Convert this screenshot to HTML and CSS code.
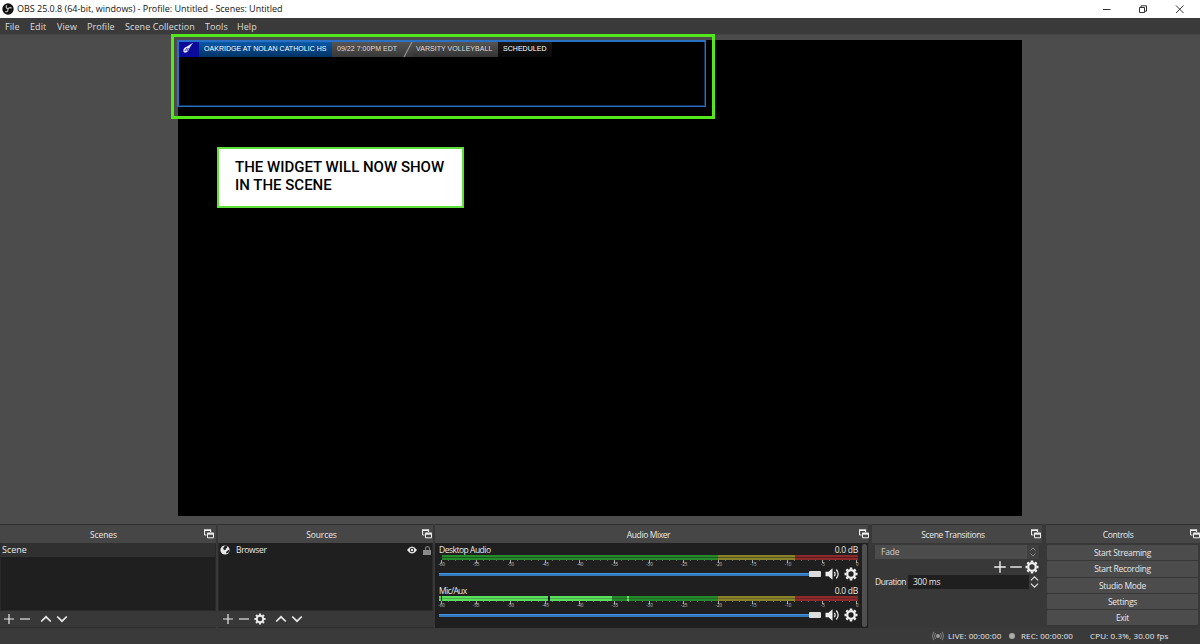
FILE: index.html
```html
<!DOCTYPE html>
<html lang="en">
<head>
<meta charset="utf-8">
<title>OBS 25.0.8</title>
<link rel="stylesheet" href="styles.css">
</head>
<body>
<svg class="defs" aria-hidden="true">
  <symbol id="popout" viewBox="0 0 10 10"><path d="M.5 6V.8h6V3M.5 1.3h6M.5 6h2" fill="none" stroke="currentColor" stroke-width="1.2"/><path d="M3.5 4.2h6v4.6h-6z" fill="none" stroke="currentColor"/><path d="M3.2 3.7h6.6v2H3.2z" fill="currentColor"/></symbol>
  <symbol id="plus" viewBox="0 0 12 12"><path d="M6 1v10M1 6h10" fill="none" stroke="currentColor" stroke-width="1.2"/></symbol>
  <symbol id="minus" viewBox="0 0 12 12"><path d="M1 6h10" fill="none" stroke="currentColor" stroke-width="1.2"/></symbol>
  <symbol id="up" viewBox="0 0 12 12"><path d="M1.2 8.5 6 3.8l4.8 4.7" fill="none" stroke="currentColor" stroke-width="1.7"/></symbol>
  <symbol id="down" viewBox="0 0 12 12"><path d="M1.2 3.5 6 8.2l4.8-4.7" fill="none" stroke="currentColor" stroke-width="1.7"/></symbol>
  <symbol id="gear" viewBox="-7 -7 14 14"><circle r="3.8" fill="none" stroke="currentColor" stroke-width="2.3"/><path d="M0-6.500v2M0 4.500v2M-6.500 0h2M4.500 0h2M-4.600-4.600l1.400 1.400M3.200 3.200l1.400 1.400M4.600-4.600 3.200-3.200M-3.200 3.200l-1.400 1.400" stroke="currentColor" stroke-width="2.500"/></symbol>
  <symbol id="speaker" viewBox="0 0 15 12"><path d="M.5 3.8h3L7.5.3v11.4l-4-3.5h-3z" fill="currentColor"/><path d="M9.3 3.8q1.6 2.2 0 4.4M11.3 1.5q3.7 4.5 0 9" fill="none" stroke="currentColor" stroke-width="1.2"/></symbol>
</svg>
<div class="window">
  <header class="titlebar">
    <svg class="logo" viewBox="0 0 12 12"><circle cx="6" cy="6" r="5.7" fill="#111"/><path d="M5 2.2C3.5 3.3 4 5.4 6 5.7M9.6 5.2C8 4 6.300 5 6.200 6.500M3.200 8.600C5 9.300 6.400 8 5.700 6.200" fill="none" stroke="#ccc" stroke-width="1.100"/></svg>
    <span class="title">OBS 25.0.8 (64-bit, windows) - Profile: Untitled - Scenes: Untitled</span>
    <svg class="winbtns" viewBox="0 0 82 10"><path d="M1 5.500h7.500" stroke="#333"/><path d="M37.500 3.500h5v5h-5zM39 3.300V1.800h5.500v5.400h-1.800" fill="none" stroke="#333"/><path d="m74 1.500 7.500 7.500M81.500 1.500 74 9" stroke="#333"/></svg>
  </header>
  <nav class="menu"><span class="m1">File</span><span class="m2">Edit</span><span class="m3">View</span><span class="m4">Profile</span><span class="m5">Scene Collection</span><span class="m6">Tools</span><span class="m7">Help</span></nav>

  <main class="preview">
    <div class="canvas">
      <div class="source">
        <div class="ticker">
          <div class="badge"><svg viewBox="0 0 12 12"><path d="M1.300 8.500Q1.500 5.500 5 4.500L11 .8 7.500 6Q6.500 10 3 10.700 1 10.600 1.300 8.500Z" fill="#e8e8ff"/><path d="m2.800 9 2.200-3M5 9l1.500-3" stroke="#1111a5" stroke-width=".8"/></svg></div>
          <div class="teams"><span>OAKRIDGE AT NOLAN CATHOLIC HS</span></div>
          <div class="when"><span>09/22 7:00PM EDT</span></div>
          <svg class="slash" viewBox="0 0 10 15"><path d="M1 15 9 0" stroke="#999" stroke-width="1.100"/></svg>
          <div class="sport"><span>VARSITY VOLLEYBALL</span></div>
          <div class="state"><span>SCHEDULED</span></div>
        </div>
      </div>
      <div class="highlight"></div>
      <div class="note"><span>THE WIDGET WILL NOW SHOW</span><br><span>IN THE SCENE</span></div>
    </div>
  </main>

  <section class="docks">
    <div class="dock scenes">
      <div class="head"><span>Scenes</span><svg><use href="#popout"/></svg></div>
      <div class="list"><div class="row selected"><span>Scene</span></div></div>
      <div class="tools"><svg><use href="#plus"/></svg><svg><use href="#minus"/></svg><svg class="gap"><use href="#up"/></svg><svg><use href="#down"/></svg></div>
    </div>
    <div class="dock sources">
      <div class="head"><span>Sources</span><svg><use href="#popout"/></svg></div>
      <div class="list"><div class="row">
        <svg class="globe" viewBox="0 0 10 10"><circle cx="5" cy="5" r="4.600" fill="#e8e8e8"/><path d="M5 .5 7.500 1.200l-.5 1.500L5.500 4l.5 1L4 5 3 3.500 3.800 2M8.500 5l1 .2L8.500 7.500 6.500 8.500 6 7z" fill="#222"/></svg>
        <span class="name">Browser</span>
        <svg class="eye" viewBox="0 0 10 8"><path d="M0 4Q5-3 10 4 5 11 0 4z" fill="#eee"/><circle cx="5" cy="4" r="2.200" fill="#1f1f1f"/><circle cx="5" cy="4" r="1.200" fill="#eee"/></svg>
        <svg class="lock" viewBox="0 0 8 9"><path d="M0 4h8v5H0z" fill="#888"/><path d="M2.500 4V2.500Q2.500.7 4.300.7T6.500 2.500V4" fill="none" stroke="#777" stroke-width="1.200"/></svg>
      </div></div>
      <div class="tools"><svg><use href="#plus"/></svg><svg><use href="#minus"/></svg><svg><use href="#gear"/></svg><svg class="gap"><use href="#up"/></svg><svg><use href="#down"/></svg></div>
    </div>
    <div class="dock mixer">
      <div class="head"><span>Audio Mixer</span><svg><use href="#popout"/></svg></div>
      <div class="channels">
        <div class="strips">
          <div class="channel">
            <div class="label"><span>Desktop Audio</span><span class="db">0.0 dB</span></div>
            <div class="meter"></div>
            <div class="ticks"></div>
            <div class="scale"><i>-60</i><i>-55</i><i>-50</i><i>-45</i><i>-40</i><i>-35</i><i>-30</i><i>-25</i><i>-20</i><i>-15</i><i>-10</i><i>-5</i><i>0</i></div>
            <div class="volume"><div class="track"></div><div class="thumb"></div><svg class="spk"><use href="#speaker"/></svg><svg class="cog"><use href="#gear"/></svg></div>
          </div>
          <div class="channel">
            <div class="label"><span class="mic">Mic/Aux</span><span class="db">0.0 dB</span></div>
            <div class="meter live"></div>
            <div class="ticks"></div>
            <div class="scale"><i>-60</i><i>-55</i><i>-50</i><i>-45</i><i>-40</i><i>-35</i><i>-30</i><i>-25</i><i>-20</i><i>-15</i><i>-10</i><i>-5</i><i>0</i></div>
            <div class="volume"><div class="track"></div><div class="thumb"></div><svg class="spk"><use href="#speaker"/></svg><svg class="cog"><use href="#gear"/></svg></div>
          </div>
        </div>
        <div class="scrollbar"></div>
      </div>
    </div>
    <div class="dock transitions">
      <div class="head"><span>Scene Transitions</span><svg><use href="#popout"/></svg></div>
      <div class="combo"><span>Fade</span><div class="spin"><svg viewBox="0 0 12 12"><use href="#up"/></svg><svg viewBox="0 0 12 12"><use href="#down"/></svg></div></div>
      <div class="actions"><svg><use href="#plus"/></svg><svg><use href="#minus"/></svg><svg><use href="#gear"/></svg></div>
      <div class="duration"><span class="dlabel">Duration</span><div class="field"><span>300 ms</span></div><div class="spin big"><svg viewBox="0 1.500 12 9"><use href="#up" width="12" height="12"/></svg><svg viewBox="0 1.500 12 9"><use href="#down" width="12" height="12"/></svg></div></div>
    </div>
    <div class="dock controls">
      <div class="head"><span>Controls</span><svg><use href="#popout"/></svg></div>
      <div class="buttons">
        <div class="btn">Start Streaming</div><div class="btn">Start Recording</div><div class="btn">Studio Mode</div><div class="btn">Settings</div><div class="btn">Exit</div>
      </div>
    </div>
  </section>
  <footer class="status">
    <svg class="signal" viewBox="0 0 12 10"><circle cx="6" cy="5" r="2" fill="#999"/><path d="M3.500 2q-2 3 0 6M8.500 2q2 3 0 6M1.700.8q-2.500 4.200 0 8.400M10.300.8q2.500 4.200 0 8.400" fill="none" stroke="#888" stroke-width=".9"/></svg>
    <span class="live-time">LIVE: 00:00:00</span><i class="dot"></i><span class="rec-time">REC: 00:00:00</span><span class="cpu">CPU: 0.3%, 30.00 fps</span>
  </footer>
</div>
</body>
</html>
```
FILE: styles.css
```css
* { box-sizing: border-box; }
body { margin: 0; font: 8.5px/12px "Open Sans", "Noto Sans", sans-serif; color: #e8e8e8; background: #3a3a3a; }
span { white-space: nowrap; }
svg { display: block; flex: none; }
i { font-style: normal; }
.defs { position: absolute; width: 0; height: 0; }
.window { width: 1200px; height: 644px; display: flex; flex-direction: column; overflow: hidden; }

.titlebar { height: 18px; background: #fff; color: #111; display: flex; align-items: center; padding-left: 2px; }
.logo { width: 12px; height: 12px; margin-right: 3px; }
.title { font-size: 9px; letter-spacing: -.02px; }
.winbtns { width: 82px; height: 10px; margin-left: auto; margin-right: 16px; }

.menu { height: 17px; background: #3a3a3a; border-bottom: 1px solid #444; display: flex; align-items: center; padding: 2px 0 0 5px; font-size: 9px; letter-spacing: .08px; color: #ddd; }
.m1 { width: 25px; }
.m2 { width: 27px; }
.m3 { width: 30px; }
.m4 { width: 38px; }
.m5 { width: 80px; }
.m6 { width: 32px; }

.preview { height: 489px; background: #4c4c4c; padding: 5px 178px 8px; }
.canvas { position: relative; width: 844px; height: 476px; background: #000; }
.source { width: 529px; height: 67px; margin-left: -1px; border: solid #2a70c4; border-width: 2px 1px 1px 2px; box-shadow: inset -1px -1px #123357; }
.highlight { position: absolute; left: -7px; top: -6px; width: 544px; height: 85px; border: 3px solid #54e81c; }
.ticker { display: flex; height: 15px; font: 7px/13px "Liberation Sans", Arial, sans-serif; letter-spacing: .04px; color: #ddd; }
.ticker span { display: block; }
.badge { width: 20px; background: #0b0b9b; padding: 0 0 0 3px; }
.badge svg { width: 12px; height: 12px; }
.teams { width: 133px; background: linear-gradient(#0759a8, #013364); padding-left: 5px; color: #fff; }
.when { width: 71px; background: linear-gradient(#555, #383838); padding-left: 5px; }
.slash { width: 10px; height: 15px; background: linear-gradient(#555, #383838); }
.sport { width: 85px; background: linear-gradient(#555, #333); padding-left: 3px; }
.state { width: 54px; background: linear-gradient(#191919, #080808); padding-left: 5px; color: #fff; }
.note { position: absolute; left: 39px; top: 107px; width: 247px; height: 61px; border: 2px solid #5ce03a; background: #fff; color: #000; padding: 9px 0 0 16px; font: 500 15px/18px Roboto, sans-serif; }

.docks { height: 104px; display: flex; background: #383838; }
.dock { display: flex; flex-direction: column; height: 104px; border-top: 1px solid #303030; }
.head { height: 18px; flex: none; background: #464646; display: flex; align-items: center; position: relative; justify-content: center; padding-top: 1px; letter-spacing: -.1px; }
.head svg { position: absolute; right: 2px; top: 4px; width: 10px; height: 10px; color: #eee; }
.scenes { width: 216px; margin-right: 2px; }
.scenes .head { padding-right: 9px; }
.sources { width: 215px; margin-right: 2px; }
.sources .head { padding-right: 8px; }
.sources .head svg { right: 1px; }
.list { height: 68px; background: #1f1f1f; border: 1px solid #292929; border-top: 0; }
.row { height: 14px; display: flex; align-items: center; }
.selected { background: #303030; padding-left: 1px; }
.selected span { font-size: 9px; }
.globe { width: 10px; height: 10px; margin-left: 1px; }
.name { margin-left: 6px; letter-spacing: -.35px; }
.eye { width: 10px; height: 8px; margin-left: auto; }
.lock { width: 8px; height: 9px; margin: 0 1px 0 6px; }
.tools { height: 17px; display: flex; align-items: center; gap: 4px; padding-left: 3px; border-bottom: 1px solid #2b2b2b; }
.tools svg { width: 12px; height: 12px; }
.tools .gap { margin-left: 5px; }
.sources .tools { padding-left: 4px; }

.mixer { width: 433px; margin-right: 4px; }
.mixer .head { padding-right: 6px; letter-spacing: -.4px; }
.mixer .head svg { right: -1px; }
.channels { height: 85px; display: flex; background: #1f1f1f; }
.strips { width: 427px; padding: 1px 4px 0; }
.channel { height: 41px; width: 419px; }
.label { height: 11px; line-height: 11px; display: flex; justify-content: space-between; letter-spacing: -.5px; }
.mic { letter-spacing: -.65px; }
.db { letter-spacing: -.25px; }
.meter { height: 5px; margin-left: 3px; background: linear-gradient(transparent 0 2px, rgba(0,0,0,.35) 2px 3px, transparent 3px), linear-gradient(90deg, #258a2b 0 276px, #88822a 276px 353px, #8c292b 353px); }
.live { margin-left: 0; background: linear-gradient(transparent 0 2px, rgba(0,0,0,.22) 2px 3px, transparent 3px), linear-gradient(90deg, #5be05e 0 2px, #222 2px 3px, #5be05e 3px 109px, #151515 109px 111px, #5be05e 111px 173px, #258a2b 173px 188px, #64e066 188px 190px, #258a2b 190px 279px, #88822a 279px 356px, #8c292b 356px); }
.ticks { height: 3px; margin-left: 2px; background: repeating-linear-gradient(90deg, #aaa 0 1px, transparent 1px 34.600px), repeating-linear-gradient(90deg, #666 0 1px, transparent 1px 6.920px) 0 0 / 100% 1px no-repeat; }
.scale { height: 4px; display: flex; justify-content: space-between; margin: 0 -4px 0 -2px; font-size: 4.5px; line-height: 3px; color: #ccc; }
.scale i { width: 9px; text-align: center; }
.volume { height: 14px; display: flex; align-items: center; }
.track { width: 370px; height: 3px; background: #3579bd; border-top: 1px solid #4391e0; }
.thumb { width: 12px; height: 6px; background: #ddd; border-radius: 1px; }
.spk { width: 15px; height: 12px; margin-left: 4px; color: #eee; }
.cog { width: 14px; height: 14px; margin-left: 4px; color: #eee; }
.scrollbar { width: 5px; height: 83px; margin-top: 1px; background: #505050; border-radius: 3px; }

.transitions { width: 170px; margin-right: 4px; }
.transitions .head { padding-right: 8px; letter-spacing: -.35px; }
.transitions .head svg { right: 1px; }
.combo { width: 164px; height: 14px; margin: 2px 0 0 3px; background: #4c4c4c; display: flex; align-items: center; justify-content: space-between; padding-left: 6px; color: #ccc; letter-spacing: -.2px; }
.spin { width: 12px; height: 14px; background: #404040; padding: 1px 3px; color: #999; }
.spin svg { width: 6px; height: 6px; }
.actions { height: 16px; display: flex; justify-content: flex-end; align-items: center; gap: 2px; padding-right: 3px; color: #eee; }
.actions svg { width: 14px; height: 14px; }
.duration { height: 14px; display: flex; align-items: center; padding-left: 3px; }
.dlabel { width: 33px; letter-spacing: -.5px; }
.field { width: 121px; height: 14px; background: #1f1f1f; padding-left: 5px; line-height: 14px; letter-spacing: -.25px; }
.big { color: #ddd; background: none; padding: 0 1px; }
.big svg { width: 9px; height: 7px; }

.controls { width: 154px; }
.controls .head { padding-right: 10px; letter-spacing: -.35px; }
.controls .head svg { right: 0; }
.buttons { display: flex; flex-direction: column; gap: 1px; padding: 2px 0 0 1px; }
.btn { width: 151px; height: 15.300px; line-height: 15px; background: #4c4c4c; border-radius: 1px; text-align: center; letter-spacing: -.3px; }

.status { height: 16px; display: flex; align-items: center; padding-left: 932px; font-size: 8px; letter-spacing: .14px; }
.signal { width: 12px; height: 10px; margin-right: 4px; }
.live-time { width: 61px; }
.dot { width: 6px; height: 6px; border-radius: 50%; background: #aaa; margin-right: 6px; }
.rec-time { width: 69px; }
```
